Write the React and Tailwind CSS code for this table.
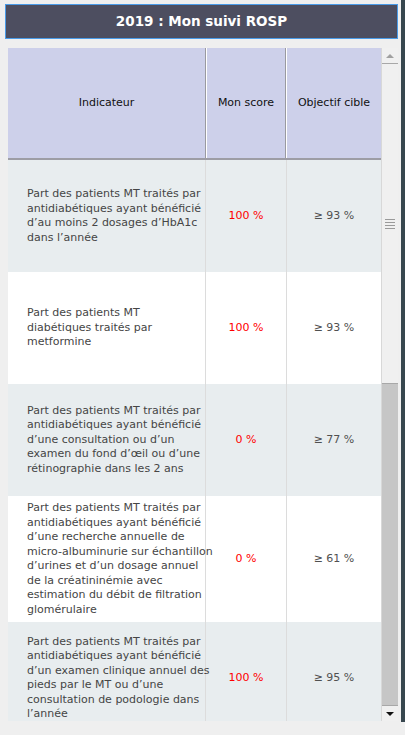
import React from 'react';

const rows = [
    {
        lines: [
            'Part des patients MT traités par',
            'antidiabétiques ayant bénéficié',
            'd’au moins 2 dosages d’HbA1c',
            'dans l’année',
        ],
        score: '100 %',
        target: '≥ 93 %',
    },
    {
        lines: ['Part des patients MT', 'diabétiques traités par', 'metformine'],
        score: '100 %',
        target: '≥ 93 %',
    },
    {
        lines: [
            'Part des patients MT traités par',
            'antidiabétiques ayant bénéficié',
            'd’une consultation ou d’un',
            'examen du fond d’œil ou d’une',
            'rétinographie dans les 2 ans',
        ],
        score: '0 %',
        target: '≥ 77 %',
    },
    {
        lines: [
            'Part des patients MT traités par',
            'antidiabétiques ayant bénéficié',
            'd’une recherche annuelle de',
            'micro-albuminurie sur échantillon',
            'd’urines et d’un dosage annuel',
            'de la créatininémie avec',
            'estimation du débit de filtration',
            'glomérulaire',
        ],
        score: '0 %',
        target: '≥ 61 %',
    },
    {
        lines: [
            'Part des patients MT traités par',
            'antidiabétiques ayant bénéficié',
            'd’un examen clinique annuel des',
            'pieds par le MT ou d’une',
            'consultation de podologie dans',
            'l’année',
        ],
        score: '100 %',
        target: '≥ 95 %',
    },
];

function Scrollbar() {
    return (
        <div className="w-[17px] flex flex-col bg-[#c6c6c6] border-l border-[#d8d8d8]">
            {/* up button */}
            <div className="h-[16px] bg-[#f0f0f0] border-b border-[#a8a8a8] flex items-center justify-center">
                <div className="w-0 h-0 border-l-[4px] border-r-[4px] border-b-[4px] border-l-transparent border-r-transparent border-b-[#a0a0a0]"></div>
            </div>
            {/* thumb */}
            <div className="h-[320px] bg-[#f0f0f0] border-b border-[#a8a8a8] flex flex-col items-center justify-center gap-[2px]">
                <div className="w-[10px] h-px bg-[#9a9a9a]"></div>
                <div className="w-[10px] h-px bg-[#9a9a9a]"></div>
                <div className="w-[10px] h-px bg-[#9a9a9a]"></div>
                <div className="w-[10px] h-px bg-[#9a9a9a]"></div>
            </div>
            <div className="flex-1"></div>
            {/* down button */}
            <div className="h-[16px] bg-[#f0f0f0] border-t border-[#a8a8a8] flex items-center justify-center">
                <div className="w-0 h-0 border-l-[4px] border-r-[4px] border-t-[4px] border-l-transparent border-r-transparent border-t-[#111]"></div>
            </div>
        </div>
    );
}

export default function App() {
    return (
        <div className="w-[405px] h-[735px] bg-[#efefef] flex overflow-hidden" style={{ fontFamily: '"DejaVu Sans", Verdana, sans-serif' }}>
            <div className="w-[401px] flex flex-col">
                <div className="ml-[5px] mt-[4px] w-[393px] h-[35px] bg-[#4d4e60] border border-[#4a9be8] flex items-center justify-center">
                    <span className="text-white font-bold text-[13.5px]">2019 : Mon suivi ROSP</span>
                </div>

                <div className="ml-[8px] mt-[9px] w-[390px] h-[673px] flex">
                    <div className="w-[373px] overflow-hidden flex flex-col">
                        {/* header */}
                        <div className="flex h-[112px] shrink-0 bg-[#cdd0ea] border-b-2 border-[#9d9da5] text-[11px] text-[#111]">
                            <div className="w-[198px] flex items-center justify-center border-r border-[#9a9aa0]">Indicateur</div>
                            <div className="w-[80px] flex items-center justify-center border-l border-r border-l-white border-r-[#9a9aa0]">Mon score</div>
                            <div className="flex-1 flex items-center justify-center border-l border-white">Objectif cible</div>
                        </div>

                        {/* body */}
                        {rows.map((row, i) => (
                            <div
                                key={i}
                                className={`flex shrink-0 min-h-[112px] text-[11px] ${i % 2 === 0 ? 'bg-[#e8edef]' : 'bg-white'}`}
                            >
                                <div className="w-[198px] flex items-center pl-[19px] py-[5px] border-r border-[#dcdcdc] text-[#454545] leading-[14.5px]">
                                    <div>
                                        {row.lines.map((line, j) => (
                                            <div key={j} className="whitespace-nowrap">{line}</div>
                                        ))}
                                    </div>
                                </div>
                                <div className="w-[81px] flex items-center justify-center border-r border-[#dcdcdc] text-[#ff0000]">
                                    {row.score}
                                </div>
                                <div className="flex-1 flex items-center justify-center text-[#505050]">{row.target}</div>
                            </div>
                        ))}
                    </div>
                    <Scrollbar />
                </div>
            </div>
            <div className="w-[4px] h-[722px] bg-[#37474f]"></div>
        </div>
    );
}
